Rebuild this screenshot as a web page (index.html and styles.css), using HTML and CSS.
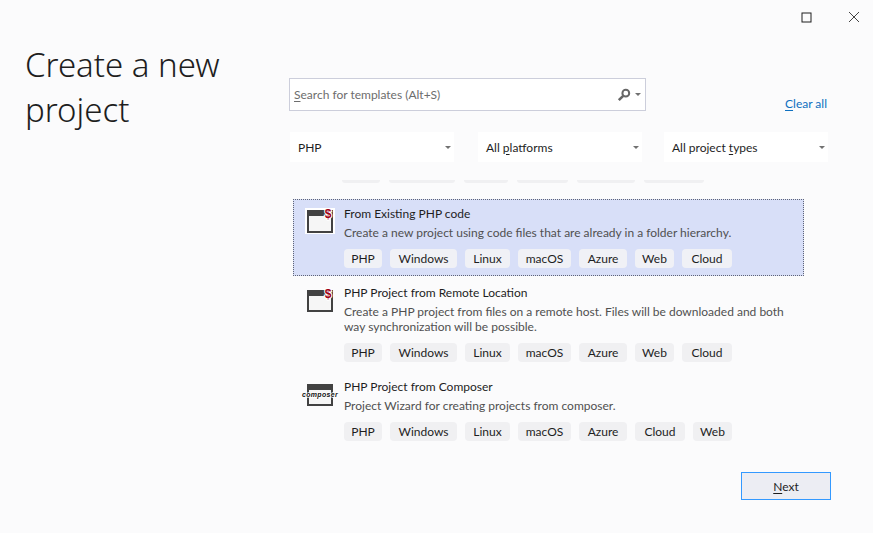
FILE: index.html
```html
<!DOCTYPE html>
<html lang="en">
<head>
  <meta charset="UTF-8" />
  <title>Create a new project</title>
  <link rel="stylesheet" href="styles.css">
</head>
<body>
  <div class="window">
    <div class="titlebar">
      <svg class="win-btn" width="11" height="11" viewBox="0 0 11 11"><rect x="1" y="1" width="9" height="9" fill="none" stroke="#1e1e1e"/></svg>
      <svg class="win-btn" width="12" height="12" viewBox="0 0 12 12"><path d="M1 1l10 10M11 1L1 11" stroke="#444" fill="none"/></svg>
    </div>
    <div class="content">
      <h1 class="page-title">Create a new project</h1>
      <div class="main">
        <div class="search-row">
          <div class="search">
            <span class="placeholder"><u>S</u>earch for templates (Alt+S)</span>
            <svg width="14" height="14" viewBox="0 0 14 14"><circle cx="8.8" cy="5.2" r="3.4" fill="none" stroke="#666" stroke-width="2"/><path d="M6.2 7.8L1.8 12.2" stroke="#666" stroke-width="2.6"/></svg>
            <span class="arrow arrow-small"></span>
          </div>
          <a class="clear"><u>C</u>lear all</a>
        </div>
        <div class="filters">
          <div class="combo"><span>PHP</span><span class="arrow"></span></div>
          <div class="combo"><span>All <u>p</u>latforms</span><span class="arrow"></span></div>
          <div class="combo"><span>All project <u>t</u>ypes</span><span class="arrow"></span></div>
        </div>
        <div class="list">
          <div class="clipped">
            <span class="stub w38"></span><span class="stub w66"></span><span class="stub w44"></span><span class="stub w51"></span><span class="stub w58"></span><span class="stub w60"></span>
          </div>

          <div class="item selected">
            <svg class="icon" width="30" height="28" viewBox="0 0 30 28">
              <rect x="0" y="2" width="30" height="26" fill="#fff"/>
              <rect x="3" y="5" width="24" height="21" fill="#f6f6f6" stroke="#424242" stroke-width="2"/>
              <rect x="3" y="5" width="24" height="5" fill="#424242"/>
              <text class="php-s" x="23" y="12">$</text>
            </svg>
            <div class="item-body">
              <div class="item-title">From Existing PHP code</div>
              <div class="item-desc">Create a new project using code files that are already in a folder hierarchy.</div>
              <div class="tags">
                <span class="tag tag-php">PHP</span><span class="tag tag-windows">Windows</span><span class="tag tag-linux">Linux</span><span class="tag tag-macos">macOS</span><span class="tag tag-azure">Azure</span><span class="tag tag-web">Web</span><span class="tag tag-cloud">Cloud</span>
              </div>
            </div>
          </div>

          <div class="item">
            <svg class="icon" width="30" height="28" viewBox="0 0 30 28">
              <rect x="3" y="6" width="24" height="20" fill="#f6f6f6" stroke="#424242" stroke-width="2"/>
              <rect x="3" y="6" width="24" height="5" fill="#424242"/>
              <text class="php-s" x="23" y="13">$</text>
            </svg>
            <div class="item-body">
              <div class="item-title">PHP Project from Remote Location</div>
              <div class="item-desc">Create a PHP project from files on a remote host. Files will be downloaded and both way synchronization will be possible.</div>
              <div class="tags">
                <span class="tag tag-php">PHP</span><span class="tag tag-windows">Windows</span><span class="tag tag-linux">Linux</span><span class="tag tag-macos">macOS</span><span class="tag tag-azure">Azure</span><span class="tag tag-web">Web</span><span class="tag tag-cloud">Cloud</span>
              </div>
            </div>
          </div>

          <div class="item">
            <svg class="icon" width="30" height="28" viewBox="0 0 30 28">
              <rect x="3" y="6" width="24" height="20" fill="#f6f6f6" stroke="#424242" stroke-width="2"/>
              <rect x="3" y="6" width="24" height="5" fill="#424242"/>
              <text class="composer" x="15" y="18">composer</text>
            </svg>
            <div class="item-body">
              <div class="item-title">PHP Project from Composer</div>
              <div class="item-desc">Project Wizard for creating projects from composer.</div>
              <div class="tags">
                <span class="tag tag-php">PHP</span><span class="tag tag-windows">Windows</span><span class="tag tag-linux">Linux</span><span class="tag tag-macos">macOS</span><span class="tag tag-azure">Azure</span><span class="tag tag-cloud">Cloud</span><span class="tag tag-web">Web</span>
              </div>
            </div>
          </div>
        </div>
        <div class="footer">
          <button class="next"><u>N</u>ext</button>
        </div>
      </div>
    </div>
  </div>
</body>
</html>
```

FILE: styles.css
```css
* {
  box-sizing: border-box;
}

body {
  margin: 0;
  background: #fbfbfc;
  font-family: "Lato", "Noto Sans", sans-serif;
  font-size: 12px;
  color: #1e1e1e;
  overflow: hidden;
}

.window {
  width: 873px;
  height: 533px;
}

u {
  text-underline-offset: 2px;
}

.titlebar {
  display: flex;
  justify-content: flex-end;
  align-items: center;
  gap: 36px;
  height: 34px;
  padding-right: 13px;
}

.content {
  display: flex;
}

.page-title {
  width: 289px;
  margin: 8px 0 0;
  padding: 0 40px 0 25px;
  font-family: "Noto Sans", sans-serif;
  font-size: 33px;
  font-weight: 350;
  line-height: 45px;
  color: #1e1e1e;
}

.main {
  width: 542px;
}

.search-row {
  display: flex;
  align-items: flex-end;
  justify-content: space-between;
  margin-top: 44px;
}

.search {
  display: flex;
  align-items: center;
  width: 357px;
  height: 33px;
  padding: 0 4px 0 4px;
  background: #fff;
  border: 1px solid #cccedb;
}

.placeholder {
  flex: 1;
  color: #6d6d6d;
}

.arrow {
  width: 0;
  height: 0;
  border-left: 3.5px solid transparent;
  border-right: 3.5px solid transparent;
  border-top: 3.5px solid #717171;
}

.arrow-small {
  margin-left: 4px;
  border-left-width: 3px;
  border-right-width: 3px;
  border-top-width: 3px;
}

.clear {
  margin: 0 4px 0 0;
  color: #0e70c0;
}

.filters {
  display: flex;
  gap: 24px;
  margin: 21px 0 0 1px;
}

.filters .combo:nth-child(3) {
  margin-left: -2px;
}

.combo {
  display: flex;
  align-items: center;
  justify-content: space-between;
  width: 164px;
  height: 30px;
  padding: 0 3px 0 8px;
  background: #fff;
}

.list {
  width: 511px;
  margin-left: 4px;
}

.clipped {
  display: flex;
  gap: 9px;
  height: 21px;
  padding: 18px 0 0 49px;
  overflow: hidden;
}

.stub {
  height: 3px;
  background: #f0f0f2;
  border-radius: 0 0 4px 4px;
}

.w38 { width: 38px; }
.w66 { width: 66px; }
.w44 { width: 44px; }
.w51 { width: 51px; }
.w58 { width: 58px; }
.w60 { width: 60px; }

.item {
  display: flex;
  margin-bottom: 2px;
  padding: 6px 8px 7px 11px;
  border: 1px solid transparent;
}

.selected {
  height: 77px;
  margin-top: 16px;
  margin-bottom: 2px;
  background: #d8dff8;
  border: 1px dotted #5f6477;
}

.item .icon {
  flex: none;
  margin-right: 8px;
  overflow: visible;
}

.item-body {
  margin-left: 1px;
}

.php-s {
  font-family: "Liberation Sans", sans-serif;
  font-size: 12px;
  font-weight: 700;
  fill: #a00014;
  stroke: #fff;
  stroke-width: 2px;
  paint-order: stroke;
  text-anchor: middle;
}

.composer {
  font-family: "Liberation Sans", sans-serif;
  font-size: 7px;
  font-style: italic;
  font-weight: 700;
  letter-spacing: 0.3px;
  fill: #111;
  stroke: #fff;
  stroke-width: 1.5px;
  paint-order: stroke;
  text-anchor: middle;
}

.item-title {
  line-height: 15px;
}

.item-desc {
  margin-top: 4px;
  line-height: 15px;
  color: #505050;
}

.tags {
  display: flex;
  gap: 8px;
  margin-top: 9px;
}

.tag {
  height: 19px;
  line-height: 19px;
  text-align: center;
  background: #f0f0f2;
  border-radius: 4px;
}

.tag-php { width: 38px; }
.tag-windows { width: 67px; }
.tag-linux { width: 45px; }
.tag-macos { width: 53px; }
.tag-azure { width: 48px; }
.tag-web { width: 39px; }
.tag-cloud { width: 50px; }

.selected .tag {
  background: #f0f1f6;
}

.footer {
  display: flex;
  justify-content: flex-end;
  margin-top: 23px;
}

.next {
  width: 90px;
  height: 28px;
  padding: 0;
  font: inherit;
  color: #1e1e1e;
  background: #ecedf3;
  border: 1px solid #3399ff;
}
```
